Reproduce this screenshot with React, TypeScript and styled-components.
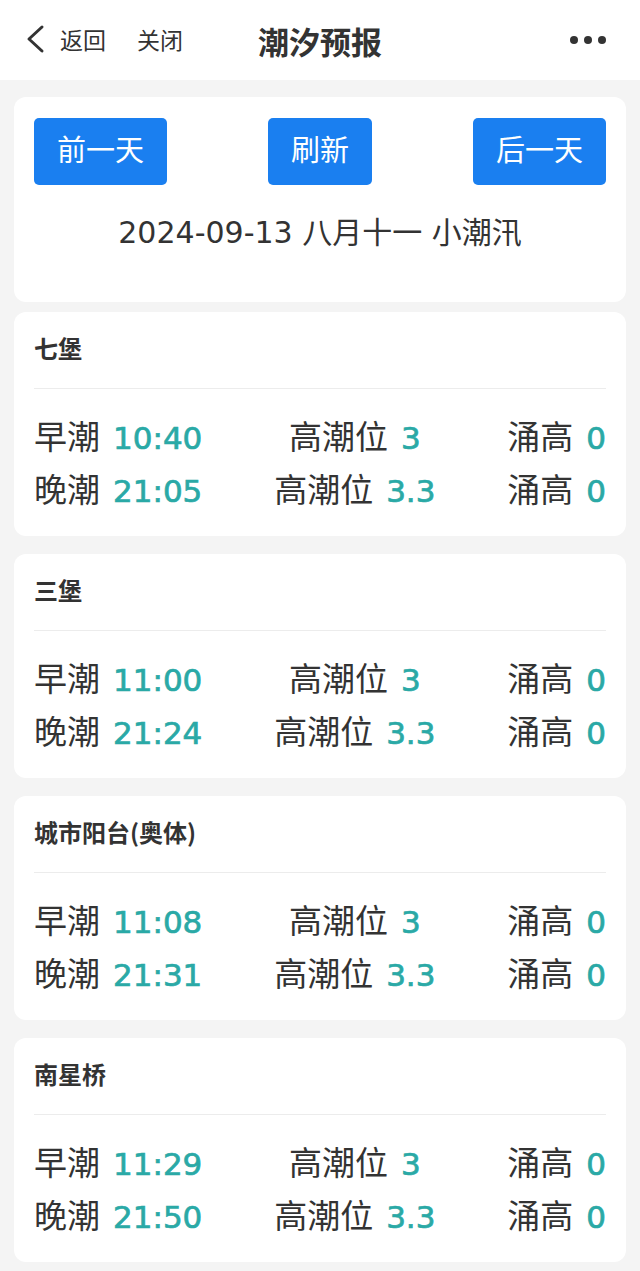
import React from 'react';
import styled, { createGlobalStyle } from 'styled-components';

const GlobalStyle = createGlobalStyle`
  html, body {
    margin: 0;
    padding: 0;
    background: #f4f4f4;
  }
  body {
    font-family: 'Noto Sans CJK SC', 'Noto Sans', sans-serif;
    color: #333;
  }
`;

interface ITide {
  time: string;
  level: string;
  surge: string;
}

interface IStation {
  name: string;
  morning: ITide;
  evening: ITide;
}

const stations: IStation[] = [
  {
    name: '七堡',
    morning: { time: '10:40', level: '3', surge: '0' },
    evening: { time: '21:05', level: '3.3', surge: '0' },
  },
  {
    name: '三堡',
    morning: { time: '11:00', level: '3', surge: '0' },
    evening: { time: '21:24', level: '3.3', surge: '0' },
  },
  {
    name: '城市阳台(奥体)',
    morning: { time: '11:08', level: '3', surge: '0' },
    evening: { time: '21:31', level: '3.3', surge: '0' },
  },
  {
    name: '南星桥',
    morning: { time: '11:29', level: '3', surge: '0' },
    evening: { time: '21:50', level: '3.3', surge: '0' },
  },
];

function TideRow({ label, tide }: { label: string; tide: ITide }) {
  return (
    <Row>
      <Cell>
        {label}
        <Value>{tide.time}</Value>
      </Cell>
      <Cell>
        高潮位
        <Value>{tide.level}</Value>
      </Cell>
      <Cell>
        涌高
        <Value>{tide.surge}</Value>
      </Cell>
    </Row>
  );
}

export default function App() {
  return (
    <>
      <GlobalStyle />
      <NavBar>
        <NavLeft>
          <svg width="22" height="30" viewBox="0 0 22 30" fill="none">
            <path d="M18 3 L5 15 L18 27" stroke="#333" strokeWidth="3" strokeLinecap="round" strokeLinejoin="round" />
          </svg>
          <NavLink>返回</NavLink>
          <NavLink $gap>关闭</NavLink>
        </NavLeft>
        <NavTitle>潮汐预报</NavTitle>
        <Dots>
          <Dot />
          <Dot />
          <Dot />
        </Dots>
      </NavBar>

      <Page>
        <TopCard>
          <ButtonBar>
            <DayButton type="button">前一天</DayButton>
            <DayButton type="button" $narrow>
              刷新
            </DayButton>
            <DayButton type="button">后一天</DayButton>
          </ButtonBar>
          <DateLine>2024-09-13 八月十一 小潮汛</DateLine>
        </TopCard>

        {stations.map((s) => (
          <Card key={s.name}>
            <StationName>{s.name}</StationName>
            <Divider />
            <TideRow label="早潮" tide={s.morning} />
            <TideRow label="晚潮" tide={s.evening} />
          </Card>
        ))}
      </Page>
    </>
  );
}

const NavBar = styled.header`
  position: relative;
  height: 80px;
  background: #fff;
  display: flex;
  align-items: center;
  justify-content: space-between;
  padding: 0 34px 0 24px;
  box-sizing: border-box;
`;

const NavLeft = styled.div`
  display: flex;
  align-items: center;
  margin-top: -2px;

  svg {
    margin-right: 14px;
  }
`;

const NavLink = styled.span<{ $gap?: boolean }>`
  font-size: 23px;
  color: #333;
  margin-left: ${(p) => (p.$gap ? '31px' : '0')};
`;

const NavTitle = styled.h1`
  position: absolute;
  left: 0;
  right: 0;
  margin: 0;
  text-align: center;
  font-size: 31px;
  font-weight: 700;
  color: #333;
  pointer-events: none;
`;

const Dots = styled.div`
  display: flex;
  gap: 6px;
`;

const Dot = styled.span`
  width: 8px;
  height: 8px;
  border-radius: 50%;
  background: #333;
`;

const Page = styled.main`
  padding: 17px 14px 20px;
  display: flex;
  flex-direction: column;
  gap: 18px;
`;

const Card = styled.section`
  background: #fff;
  border-radius: 12px;
  padding: 18px 20px 0;
  height: 224px;
  box-sizing: border-box;
`;

const TopCard = styled(Card)`
  padding-top: 21px;
  height: 205px;
  margin-bottom: -8px;
`;

const ButtonBar = styled.div`
  display: flex;
  justify-content: space-between;
`;

const DayButton = styled.button<{ $narrow?: boolean }>`
  width: ${(p) => (p.$narrow ? '104px' : '133px')};
  height: 67px;
  border: none;
  border-radius: 5px;
  background: #1a7ff0;
  color: #fff;
  font-family: inherit;
  font-size: 29px;
  padding: 0 0 6px;
  line-height: 1;
`;

const DateLine = styled.div`
  margin-top: 28px;
  text-align: center;
  font-family: 'DejaVu Sans', 'Noto Sans CJK SC', sans-serif;
  font-size: 30px;
  color: #333;
  line-height: 40px;
`;

const StationName = styled.h2`
  margin: 0;
  font-size: 24px;
  font-weight: 700;
  color: #333;
  line-height: 36px;
`;

const Divider = styled.div`
  height: 1px;
  background: #ececec;
  margin: 22px 0 19px;
`;

const Row = styled.div`
  display: flex;
  justify-content: space-between;
  align-items: center;
  height: 53px;
  font-size: 33px;
  color: #333;
`;

const Cell = styled.span`
  white-space: nowrap;
`;

const Value = styled.span`
  margin-left: 13px;
  font-family: 'DejaVu Sans', 'Noto Sans', sans-serif;
  font-size: 31px;
  color: #2aa9a6;
  -webkit-text-stroke: 0.7px #2aa9a6;
`;
